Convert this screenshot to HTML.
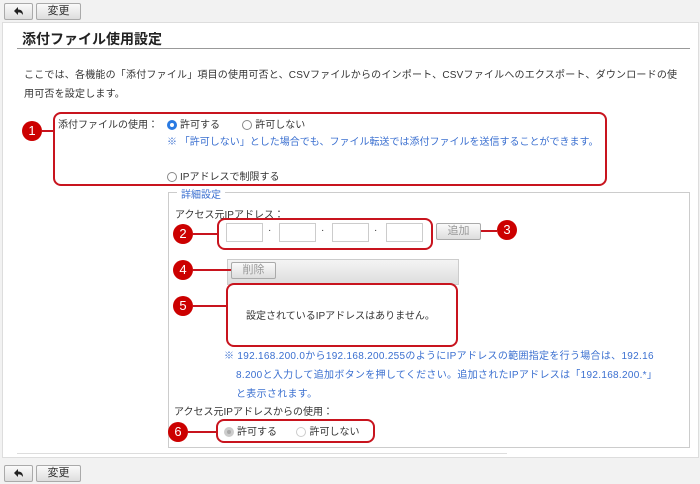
<!DOCTYPE html><html><head><meta charset="utf-8"><style>
body{margin:0;width:700px;height:483px;background:#f2f2f2;font-family:"Liberation Sans","Noto Sans CJK JP",sans-serif;font-size:10px;color:#333;position:relative;overflow:hidden}
.a{position:absolute}
.btn{position:absolute;height:15px;border:1px solid #aaa;border-radius:2px;background:linear-gradient(#fafafa,#ddd);font-size:11px;text-align:center;line-height:15px;color:#333}
.rb{position:absolute;border:2px solid #c8141e;border-radius:8px}
.c{position:absolute;width:20px;height:20px;border-radius:50%;background:#c00;color:#fff;font-size:13px;text-align:center;line-height:20px}
.ln{position:absolute;height:2px;background:#c8141e}
.r{display:inline-block;width:10px;height:10px;border:1px solid #888;border-radius:50%;vertical-align:-2px;margin-right:3px;background:#fff;box-sizing:border-box}
.ip{position:absolute;width:35px;height:17px;border:1px solid #ccc;background:#fff;top:223px}
.blue{color:#3a6fd0}
</style></head><body>
<div class="btn" style="left:4px;top:3px;width:27px"><svg width="12" height="11" viewBox="0 0 12 11" style="margin-top:2px"><path d="M1 5 L5 1 L5 3.5 Q10 3.5 10 9 Q8 6 5 6.5 L5 9 Z" fill="#222"/></svg></div>
<div class="btn" style="left:36px;top:3px;width:43px">変更</div>
<div class="a" style="left:2px;top:22px;width:695px;height:434px;background:#fff;border:1px solid #ddd"></div>
<div class="a" style="left:22px;top:29px;font-size:14px;font-weight:bold;color:#222">添付ファイル使用設定</div>
<div class="a" style="left:17px;top:48px;width:673px;height:1px;background:#999"></div>
<div class="a" style="left:24px;top:66px;width:662px;line-height:19px;font-size:10px;letter-spacing:0.2px">ここでは、各機能の「添付ファイル」項目の使用可否と、CSVファイルからのインポート、CSVファイルへのエクスポート、ダウンロードの使用可否を設定します。</div>
<div class="rb" style="left:53px;top:112px;width:550px;height:70px"></div>
<div class="c" style="left:22px;top:121px">1</div><div class="ln" style="left:42px;top:130px;width:12px"></div>
<div class="a" style="left:58px;top:116px">添付ファイルの使用：</div>
<div class="a" style="left:167px;top:116px"><span class="r" style="border:3px solid #2a7ae2"></span>許可する&nbsp;&nbsp;&nbsp;&nbsp;&nbsp;&nbsp;&nbsp;&nbsp;<span class="r"></span>許可しない</div>
<div class="a blue" style="left:167px;top:133px">※ 「許可しない」とした場合でも、ファイル転送では添付ファイルを送信することができます。</div>
<div class="a" style="left:167px;top:168px"><span class="r"></span>IPアドレスで制限する</div>
<div class="a" style="left:168px;top:192px;width:520px;height:254px;border:1px solid #ccc"></div>
<div class="a blue" style="left:177px;top:186px;background:#fff;padding:0 4px">詳細設定</div>
<div class="a" style="left:175px;top:206px">アクセス元IPアドレス：</div>
<div class="rb" style="left:217px;top:218px;width:212px;height:28px"></div>
<div class="ip" style="left:226px"></div><div class="ip" style="left:279px"></div><div class="ip" style="left:332px"></div><div class="ip" style="left:386px"></div>
<div class="a" style="left:268px;top:225px">·</div><div class="a" style="left:321px;top:225px">·</div><div class="a" style="left:374px;top:225px">·</div>
<div class="btn" style="left:436px;top:223px;width:43px;color:#999">追加</div>
<div class="ln" style="left:481px;top:230px;width:16px"></div><div class="c" style="left:497px;top:220px">3</div>
<div class="c" style="left:173px;top:224px">2</div><div class="ln" style="left:193px;top:233px;width:25px"></div>
<div class="a" style="left:227px;top:259px;width:230px;height:24px;background:linear-gradient(#f4f4f4,#ddd);border:1px solid #ccc"></div>
<div class="btn" style="left:231px;top:262px;width:43px;color:#999">削除</div>
<div class="c" style="left:173px;top:260px">4</div><div class="ln" style="left:193px;top:269px;width:38px"></div>
<div class="rb" style="left:226px;top:283px;width:228px;height:60px;background:#fff"></div>
<div class="a" style="left:246px;top:307px">設定されているIPアドレスはありません。</div>
<div class="c" style="left:173px;top:296px">5</div><div class="ln" style="left:193px;top:305px;width:34px"></div>
<div class="a blue" style="left:224px;top:347px;width:426px;line-height:19px;padding-left:12px;text-indent:-12px;letter-spacing:0.3px;word-break:break-all">※ 192.168.200.0から192.168.200.255のようにIPアドレスの範囲指定を行う場合は、192.168.200と入力して追加ボタンを押してください。追加されたIPアドレスは「192.168.200.*」と表示されます。</div>
<div class="a" style="left:174px;top:403px">アクセス元IPアドレスからの使用：</div>
<div class="rb" style="left:216px;top:419px;width:155px;height:20px"></div>
<div class="a" style="left:224px;top:423px"><span class="r" style="border:3px solid #ccc;background:#aaa"></span>許可する&nbsp;&nbsp;&nbsp;&nbsp;&nbsp;&nbsp;&nbsp;<span class="r" style="border-color:#ccc"></span>許可しない</div>
<div class="c" style="left:168px;top:422px">6</div><div class="ln" style="left:188px;top:431px;width:29px"></div>
<div class="a" style="left:17px;top:453px;width:490px;height:1px;background:#ddd"></div>
<div class="btn" style="left:4px;top:465px;width:27px"><svg width="12" height="11" viewBox="0 0 12 11" style="margin-top:2px"><path d="M1 5 L5 1 L5 3.5 Q10 3.5 10 9 Q8 6 5 6.5 L5 9 Z" fill="#222"/></svg></div>
<div class="btn" style="left:36px;top:465px;width:43px">変更</div>
</body></html>
